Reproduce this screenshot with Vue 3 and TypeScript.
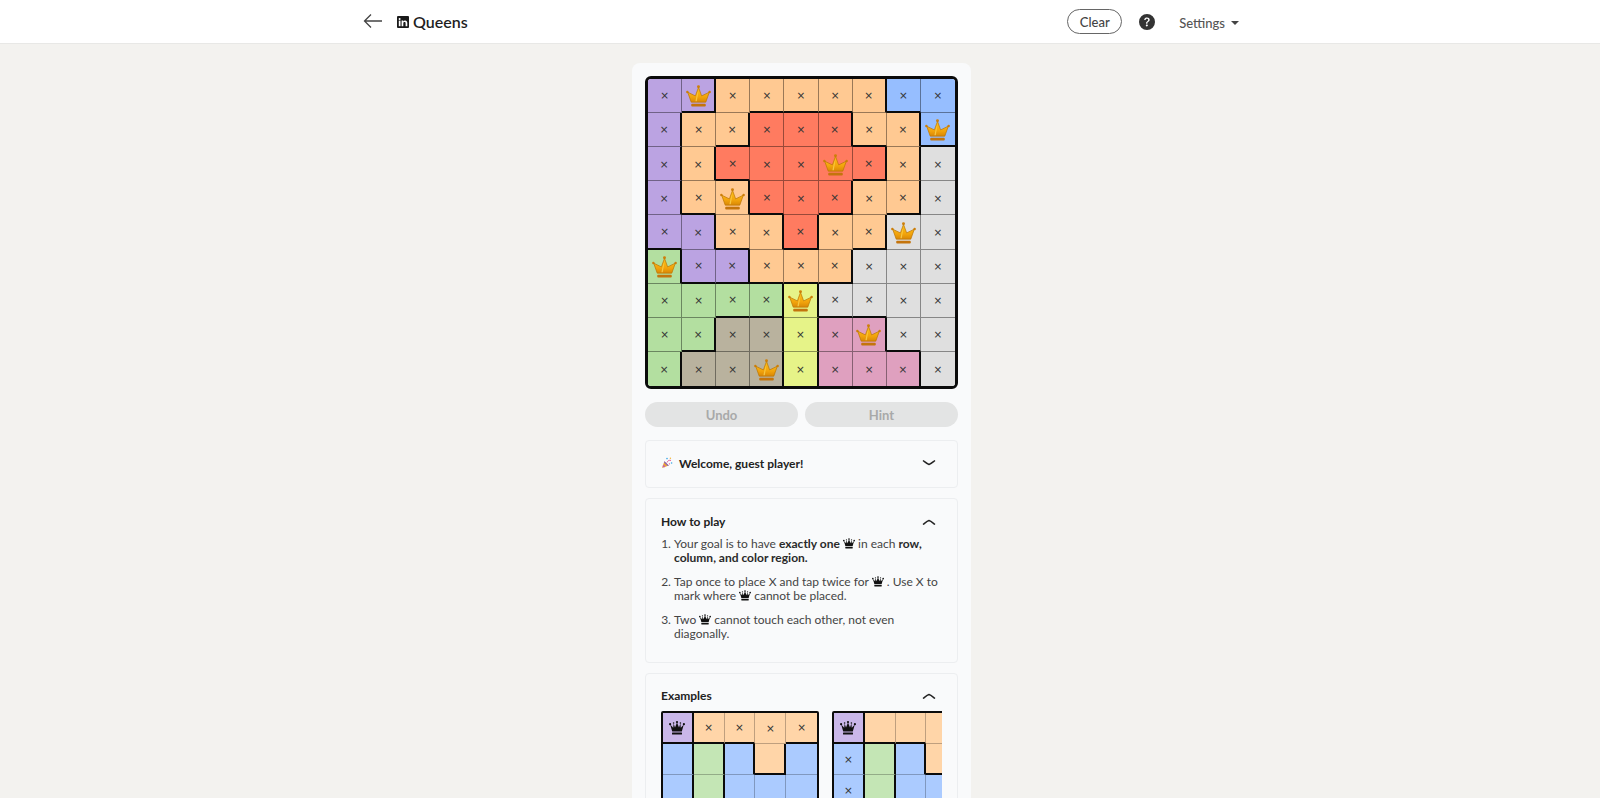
<script setup lang="ts">
interface Cell {
  key: string
  cls: string
  mark: string
}

const mainRows = ['PPOOOOOBB', 'POORRROOB', 'PORRRRROG', 'POORRROOG', 'PPOOROOGG', 'LPPOOOGGG', 'LLLLYGGGG', 'LLTTYMMGG', 'LTTTYMMMG']
const mainCrowns = new Set(['0,1', '1,8', '2,5', '3,2', '4,7', '5,0', '6,4', '7,6', '8,3'])

function build(rows: string[], mark: (r: number, c: number) => string): Cell[] {
  const out: Cell[] = []
  rows.forEach((row, r) => {
    row.split('').forEach((ch, c) => {
      const right = c < row.length - 1 ? (row[c + 1] !== ch ? 'thick-r' : 'thin-r') : ''
      const bottom = r < rows.length - 1 ? (rows[r + 1][c] !== ch ? 'thick-b' : 'thin-b') : ''
      out.push({ key: `${r}-${c}`, cls: `c-${ch} ${right} ${bottom}`, mark: mark(r, c) })
    })
  })
  return out
}

const board = build(mainRows, (r, c) => (mainCrowns.has(`${r},${c}`) ? 'crown' : 'x'))

const exRows = ['POOOO', 'BLBOB', 'BLBBB', 'BLLLB', 'BBBBB']
const exampleA = build(exRows, (r, c) => (r === 0 && c === 0 ? 'crown' : r === 0 ? 'x' : ''))
const exampleB = build(exRows, (r, c) => (r === 0 && c === 0 ? 'crown' : c === 0 ? 'x' : ''))
const examples = [
  { id: 'a', cells: exampleA },
  { id: 'b', cells: exampleB },
]
</script>

<template>
  <div class="page">
    <svg width="0" height="0" class="defs" aria-hidden="true">
      <defs>
        <linearGradient id="gold" x1="0" y1="0" x2="0" y2="1">
          <stop offset="0" stop-color="#fcc21a" />
          <stop offset="0.65" stop-color="#f2a40c" />
          <stop offset="1" stop-color="#d98806" />
        </linearGradient>
        <symbol id="gold-crown" viewBox="0 0 24 21">
          <circle cx="12" cy="1.6" r="1.4" fill="#cf7f0a" />
          <circle cx="1.3" cy="6.6" r="1.2" fill="#cf7f0a" />
          <circle cx="22.7" cy="6.6" r="1.2" fill="#cf7f0a" />
          <path d="M12 2.2 15 10.4 22.4 6.8 19 16.4H5L1.6 6.8 9 10.4Z" fill="url(#gold)" stroke="#bd7606" stroke-width=".7" />
          <path d="M11.8 5.5 10.4 15.6H9L10.4 9.6Z" fill="#ffe46a" opacity=".6" />
          <rect x="5" y="18" width="14" height="2.6" rx="1" fill="#c4740c" />
        </symbol>
        <symbol id="black-crown" viewBox="0 0 16 14">
          <circle cx="8" cy="1.1" r="1.1" />
          <circle cx="1.1" cy="3.2" r="1.1" />
          <circle cx="14.9" cy="3.2" r="1.1" />
          <circle cx="4.6" cy="2" r=".8" />
          <circle cx="11.4" cy="2" r=".8" />
          <path d="M8 1.4 10 6.6 11.4 2.4 11.8 6.8 14.8 3.6 12.8 10.6H3.2L1.2 3.6 4.2 6.8 4.6 2.4 6 6.6Z" />
          <rect x="3" y="11.6" width="10" height="2" rx=".5" />
        </symbol>
      </defs>
    </svg>

    <header class="topbar">
      <div class="topbar-inner">
        <div class="brand">
          <svg class="back" viewBox="0 0 20 16" width="20" height="16" fill="none" stroke="#444" stroke-width="1.3">
            <path d="M19 8H1.5M8 1.5 1.5 8 8 14.5" />
          </svg>
          <svg class="logo" viewBox="0 0 12 12" width="12" height="12">
            <rect width="12" height="12" rx="1" fill="#1a1a1a" />
            <rect x="1.8" y="4.6" width="1.7" height="5.6" fill="#fff" />
            <circle cx="2.65" cy="2.9" r="1" fill="#fff" />
            <path d="M4.6 4.6H6.2V5.4C6.6 4.8 7.2 4.4 8 4.4 9.6 4.4 10.3 5.4 10.3 7V10.2H8.6V7.4C8.6 6.5 8.3 6 7.6 6 6.8 6 6.3 6.5 6.3 7.4V10.2H4.6Z" fill="#fff" />
          </svg>
          <span class="title">Queens</span>
        </div>
        <div class="actions">
          <button class="clear" type="button">Clear</button>
          <svg class="help" viewBox="0 0 16 16" width="16" height="16" fill="#333">
            <path d="M16 8A8 8 0 1 1 0 8a8 8 0 0 1 16 0M5.496 6.033h.825c.138 0 .248-.113.266-.25.09-.656.54-1.134 1.342-1.134.686 0 1.314.343 1.314 1.168 0 .635-.374.927-.965 1.371-.673.489-1.206 1.06-1.168 1.987l.003.217a.25.25 0 0 0 .25.246h.811a.25.25 0 0 0 .25-.25v-.105c0-.718.273-.927 1.01-1.486.609-.463 1.244-.977 1.244-2.056 0-1.511-1.276-2.241-2.673-2.241-1.267 0-2.655.59-2.75 2.286a.237.237 0 0 0 .241.247m2.325 6.443c.61 0 1.029-.394 1.029-.927 0-.552-.42-.94-1.029-.94-.584 0-1.009.388-1.009.94 0 .533.425.927 1.01.927z" />
          </svg>
          <span class="settings">Settings<i class="caret"></i></span>
        </div>
      </div>
    </header>

    <main class="card">
      <div class="board">
        <div v-for="cell in board" :key="cell.key" class="cell" :class="cell.cls">
          <svg v-if="cell.mark === 'crown'" class="gold" width="25" height="22"><use href="#gold-crown" /></svg>
          <span v-else class="x">×</span>
        </div>
      </div>

      <div class="buttons">
        <button class="ghost" type="button" disabled>Undo</button>
        <button class="ghost" type="button" disabled>Hint</button>
      </div>

      <section class="panel welcome">
        <div class="panel-head">
          <span class="welcome-title">
            <svg class="popper" viewBox="0 0 12 12" width="12" height="12">
              <path d="M1 11 3.4 4.2 7.8 8.6Z" fill="#e9a03c" />
              <path d="M2.2 7.8 4.2 9.8 3 10.4 1.6 9.4Z" fill="#c65fb0" />
              <path d="M3.4 4.2 7.8 8.6 6.8 9 3 5.2Z" fill="#7a5ad0" />
              <path d="M6 5.5C6.6 3.8 8 3 10 3.4" fill="none" stroke="#e24c8a" stroke-width=".9" />
              <circle cx="6" cy="1.6" r=".8" fill="#39a6e8" />
              <circle cx="9.4" cy="1.2" r=".7" fill="#f2b632" />
              <circle cx="10.6" cy="6" r=".8" fill="#39a6e8" />
              <circle cx="8.4" cy="6.8" r=".6" fill="#e24c8a" />
            </svg>
            Welcome, guest player!
          </span>
          <svg class="chev" viewBox="0 0 14 8" width="14" height="8" fill="none" stroke="#222" stroke-width="1.5"><path d="M1 1.5C3 3 5 5 7 5.5 9 5 11 3 13 1.5" /></svg>
        </div>
      </section>

      <section class="panel how">
        <div class="panel-head">
          <span class="panel-title">How to play</span>
          <svg class="chev" viewBox="0 0 14 8" width="14" height="8" fill="none" stroke="#222" stroke-width="1.5"><path d="M1 6.5C3 5 5 3 7 2.5 9 3 11 5 13 6.5" /></svg>
        </div>
        <ol class="steps">
          <li>Your goal is to have <b>exactly one</b> <svg class="mini" width="12" height="11"><use href="#black-crown" /></svg> in each <b>row, column, and color region.</b></li>
          <li>Tap once to place X and tap twice for <svg class="mini" width="12" height="11"><use href="#black-crown" /></svg> . Use X to mark where <svg class="mini" width="12" height="11"><use href="#black-crown" /></svg> cannot be placed.</li>
          <li>Two <svg class="mini" width="12" height="11"><use href="#black-crown" /></svg> cannot touch each other, not even diagonally.</li>
        </ol>
      </section>

      <section class="panel examples">
        <div class="panel-head">
          <span class="panel-title">Examples</span>
          <svg class="chev" viewBox="0 0 14 8" width="14" height="8" fill="none" stroke="#222" stroke-width="1.5"><path d="M1 6.5C3 5 5 3 7 2.5 9 3 11 5 13 6.5" /></svg>
        </div>
        <div class="example-strip">
          <div v-for="ex in examples" :key="ex.id" class="ex-board">
            <div v-for="cell in ex.cells" :key="cell.key" class="cell ex-cell" :class="cell.cls">
              <svg v-if="cell.mark === 'crown'" width="16" height="14"><use href="#black-crown" /></svg>
              <span v-else-if="cell.mark === 'x'" class="x">×</span>
            </div>
          </div>
        </div>
      </section>
    </main>
  </div>
</template>

<style>
html, body {
  margin: 0;
  background: #f3f2ef;
  overflow: hidden;
}
</style>

<style scoped>
.page {
  height: 100vh;
  overflow: hidden;
  background: #f3f2ef;
  font-family: Lato, "Open Sans", sans-serif;
  color: #333;
  display: flex;
  flex-direction: column;
  align-items: center;
}
.defs { position: absolute; }
.topbar {
  width: 100%;
  height: 44px;
  flex: none;
  box-sizing: border-box;
  background: #fff;
  border-bottom: 1px solid #e8e8e6;
}
.topbar-inner {
  width: 878px;
  height: 43px;
  margin: 0 auto;
  padding-left: 2px;
  box-sizing: border-box;
  display: flex;
  align-items: center;
  justify-content: space-between;
}
.brand { display: flex; align-items: center; }
.back { margin-right: 14px; margin-top: -2px; }
.logo { margin-right: 4px; }
.title { font-size: 16px; font-weight: 600; color: #1f1f1f; }
.actions { display: flex; align-items: center; }
.clear {
  width: 55px;
  height: 25px;
  box-sizing: border-box;
  border: 1px solid #666;
  border-radius: 13px;
  background: #fff;
  font: 500 13px Lato, sans-serif;
  color: #444;
  padding: 0;
}
.help { margin-left: 17px; margin-right: 24px; }
.settings { font-size: 13px; font-weight: 500; color: #555; display: flex; align-items: center; margin-top: 2px; }
.caret {
  margin-left: 6px;
  border-left: 4px solid transparent;
  border-right: 4px solid transparent;
  border-top: 4px solid #444;
}

.card {
  width: 339px;
  margin: 19px 0 0 3px;
  box-sizing: border-box;
  padding: 13px 13px 0;
  background: #f9fafb;
  border-radius: 8px 8px 0 0;
  flex: 1;
  min-height: 0;
}
.board {
  width: 313px;
  height: 313px;
  box-sizing: border-box;
  border: 3px solid #0b0b0b;
  border-radius: 6px;
  overflow: hidden;
  display: grid;
  grid-template-columns: repeat(9, 1fr);
  grid-template-rows: repeat(9, 1fr);
}
.cell {
  box-sizing: border-box;
  display: flex;
  align-items: center;
  justify-content: center;
  min-width: 0;
  min-height: 0;
}
.gold { margin-top: 2px; }
.thin-r { border-right: 1px solid rgba(0, 0, 0, 0.4); }
.thin-b { border-bottom: 1px solid rgba(0, 0, 0, 0.4); }
.thick-r { border-right: 2px solid #0b0b0b; }
.thick-b { border-bottom: 2px solid #0b0b0b; }
.x { font: 10.5px/1 "DejaVu Sans", sans-serif; color: #333; }
.c-P { background: #bba3e2; }
.c-O { background: #ffc992; }
.c-B { background: #96beff; }
.c-R { background: #ff7b60; }
.c-G { background: #dfdfdf; }
.c-L { background: #b3dfa0; }
.c-Y { background: #e6f388; }
.c-M { background: #dfa0bf; }
.c-T { background: #b9b29e; }

.buttons {
  display: grid;
  grid-template-columns: 1fr 1fr;
  gap: 7px;
  margin-top: 13px;
}
.ghost {
  height: 25px;
  border: none;
  border-radius: 13px;
  padding: 0;
  background: #e3e4e4;
  color: #a8a9a9;
  font: 700 13px Lato, sans-serif;
}

.panel {
  margin-top: 10px;
  box-sizing: border-box;
  background: #f9fafb;
  border: 1px solid #eceef0;
  border-radius: 4px;
  padding: 0 15px;
}
.welcome { margin-top: 13px; height: 48px; padding-bottom: 2px; display: flex; flex-direction: column; justify-content: center; }
.panel-head { display: flex; align-items: center; justify-content: space-between; }
.panel-head .chev { margin-right: 6px; }
.welcome-title { font-size: 12px; font-weight: 700; color: #222; display: flex; align-items: center; }
.popper { margin-right: 6px; }
.panel-title { font-size: 12px; font-weight: 700; color: #222; }
.how { height: 165px; padding-top: 15px; }
.steps {
  margin: 8px 0 0;
  padding: 0 0 0 13px;
  font-size: 12px;
  line-height: 14px;
  color: #444;
}
.steps li { margin-bottom: 10px; }
.steps b { color: #2a2a2a; font-weight: 700; }
.mini { vertical-align: -1px; fill: #111; }
.examples { padding-top: 14px; height: 200px; }
.example-strip {
  margin-top: 8px;
  display: flex;
  gap: 13px;
  overflow: hidden;
}
.ex-board {
  flex: none;
  width: 158px;
  box-sizing: border-box;
  border: 2px solid #0b0b0b;
  border-radius: 2px;
  display: grid;
  grid-template-columns: repeat(5, 1fr);
  grid-auto-rows: 31px;
  fill: #111;
}
.ex-cell.c-P { background: #cab7e9; }
.ex-cell.c-O { background: #ffd5a8; }
.ex-cell.c-B { background: #abcbff; }
.ex-cell.c-L { background: #c4e6b5; }
.ex-cell.thin-r { border-right-color: rgba(0, 0, 0, 0.25); }
.ex-cell.thin-b { border-bottom-color: rgba(0, 0, 0, 0.25); }
</style>
